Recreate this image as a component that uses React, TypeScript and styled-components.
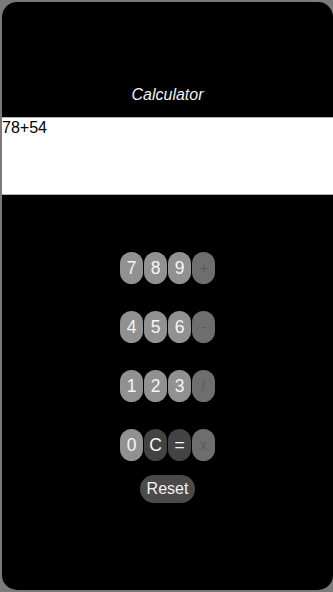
import React from "react";
import styled, { createGlobalStyle } from "styled-components";

const Global = createGlobalStyle`
  html, body { margin: 0; padding: 0; background: #7a7a7a; }
  body { font-family: "Liberation Sans", Arial, sans-serif; }
`;

const Page = styled.div`
  width: 333px;
  height: 592px;
  padding: 2px 0 2px 2px;
  box-sizing: border-box;
  background: #7a7a7a;
`;

const Frame = styled.div`
  width: 331px;
  height: 588px;
  background: #000;
  border-radius: 15px;
  display: flex;
  flex-direction: column;
  overflow: hidden;
`;

const Header = styled.div`
  height: 115px;
  display: flex;
  align-items: flex-end;
  justify-content: center;
  padding-bottom: 13px;
  box-sizing: border-box;
`;

const Title = styled.h1`
  margin: 0;
  font-size: 16px;
  line-height: 19px;
  font-weight: normal;
  font-style: italic;
  color: #f2f2f2;
`;

const Display = styled.div`
  height: 78px;
  box-sizing: border-box;
  background: #fff;
  border-top: 1px solid #b4b4b4;
  border-bottom: 1px solid #b4b4b4;
  font-size: 16px;
  line-height: 19px;
  color: #000;
`;

const Keypad = styled.div`
  display: flex;
  flex-direction: column;
  align-items: center;
  gap: 27px;
  margin-top: 57px;
`;

const Row = styled.div`
  display: flex;
  gap: 1.5px;
`;

type Kind = "digit" | "op" | "action";

const bg: Record<Kind, string> = {
  digit: "#919191",
  op: "#6e6e6e",
  action: "#434343",
};

const Key = styled.button<{ $kind: Kind }>`
  width: 22.5px;
  height: 32px;
  border-radius: 12px;
  border: none;
  padding: 0;
  background: ${(p) => bg[p.$kind]};
  color: ${(p) => (p.$kind === "op" ? "#5a5a5a" : "#f6f6f6")};
  font-family: "Liberation Sans", Arial, sans-serif;
  font-size: ${(p) => (p.$kind === "op" ? "14px" : "17.5px")};
  display: flex;
  align-items: center;
  justify-content: center;
`;

const ResetButton = styled.button`
  margin-top: -13px;
  width: 55px;
  height: 28px;
  border-radius: 14px;
  border: none;
  background: #4a4a4a;
  color: #f2f2f2;
  font-family: "Liberation Sans", Arial, sans-serif;
  font-size: 16px;
  padding: 0;
`;

const rows: { label: string; kind: Kind }[][] = [
  [
    { label: "7", kind: "digit" },
    { label: "8", kind: "digit" },
    { label: "9", kind: "digit" },
    { label: "+", kind: "op" },
  ],
  [
    { label: "4", kind: "digit" },
    { label: "5", kind: "digit" },
    { label: "6", kind: "digit" },
    { label: "-", kind: "op" },
  ],
  [
    { label: "1", kind: "digit" },
    { label: "2", kind: "digit" },
    { label: "3", kind: "digit" },
    { label: "/", kind: "op" },
  ],
  [
    { label: "0", kind: "digit" },
    { label: "C", kind: "action" },
    { label: "=", kind: "action" },
    { label: "x", kind: "op" },
  ],
];

export default function App() {
  return (
    <Page>
      <Global />
      <Frame>
        <Header>
          <Title>Calculator</Title>
        </Header>
        <Display>78+54</Display>
        <Keypad>
          {rows.map((r, i) => (
            <Row key={i}>
              {r.map((k) => (
                <Key key={k.label} $kind={k.kind}>
                  {k.label}
                </Key>
              ))}
            </Row>
          ))}
          <ResetButton>Reset</ResetButton>
        </Keypad>
      </Frame>
    </Page>
  );
}
